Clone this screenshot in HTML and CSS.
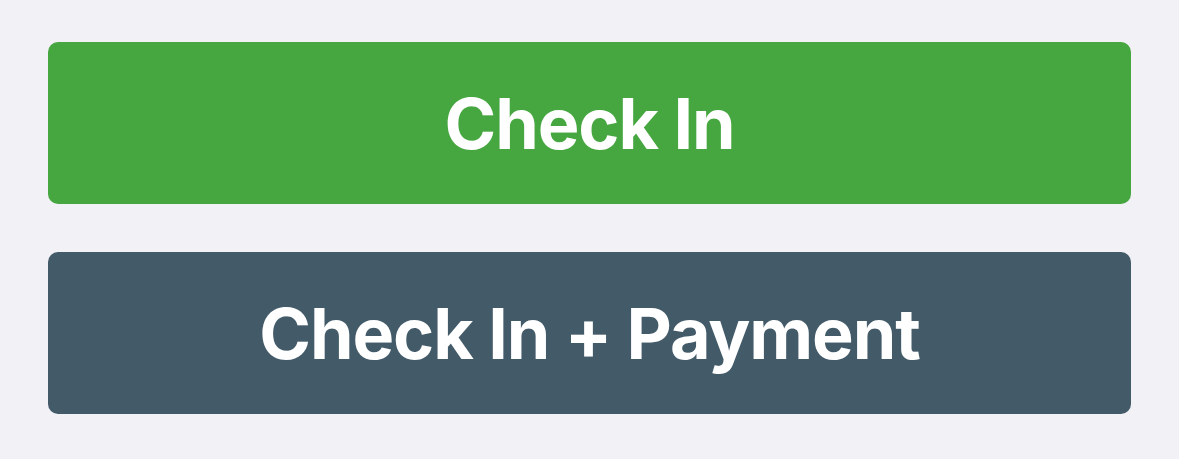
FILE: index.html
```html
<!DOCTYPE html>
<html>
<head>
<meta charset="utf-8">
<link rel="stylesheet" href="styles.css">
</head>
<body>
<div class="actions">
  <button class="btn btn-checkin">Check In</button>
  <button class="btn btn-payment">Check In + Payment</button>
</div>
</body>
</html>
```
FILE: styles.css
```css
html, body {
  margin: 0;
  padding: 0;
  background: #f1f1f6;
}

.actions {
  display: flex;
  flex-direction: column;
  gap: 48px;
  padding: 42px 48px;
}

.btn {
  height: 162px;
  border: none;
  border-radius: 10px;
  color: #ffffff;
  font-family: Inter, "Noto Sans", sans-serif;
  font-weight: 700;
  font-size: 70px;
  letter-spacing: -1.1px;
  display: flex;
  align-items: center;
  justify-content: center;
  padding: 0;
}

.btn-checkin {
  background: #46a640;
}

.btn-payment {
  background: #435a69;
}
```
